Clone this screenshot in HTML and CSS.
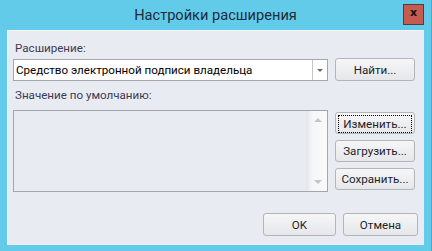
FILE: index.html
```html
<!DOCTYPE html>
<html lang="ru">
<head>
    <meta charset="UTF-8">
    <title>Настройки расширения</title>
    <link rel="stylesheet" href="styles.css">
</head>
<body>
    <div class="window">
        <div class="titlebar">
            <span class="title">Настройки расширения</span>
            <div class="close-btn">x</div>
        </div>
        <div class="client">
            <div class="label">Расширение:</div>
            <div class="row">
                <div class="combo">
                    <span class="combo-text">Средство электронной подписи владельца</span>
                    <span class="combo-arrow"></span>
                </div>
                <button class="btn">Найти...</button>
            </div>
            <div class="label second">Значение по умолчанию:</div>
            <div class="row top">
                <div class="listbox">
                    <div class="scrollbar">
                        <span class="arrow-up"></span>
                        <span class="arrow-down"></span>
                    </div>
                </div>
                <div class="side-buttons">
                    <button class="btn focused"><span>Изменить...</span></button>
                    <button class="btn">Загрузить...</button>
                    <button class="btn">Сохранить...</button>
                </div>
            </div>
            <div class="footer">
                <button class="btn ok">OK</button>
                <button class="btn cancel">Отмена</button>
            </div>
        </div>
    </div>
</body>
</html>
```

FILE: styles.css
```css
body {
    margin: 0;
    background-color: #63cbea;
    font-family: Roboto, "Noto Sans", sans-serif;
}
.window {
    width: 432px;
    height: 251px;
    display: flex;
    flex-direction: column;
    box-sizing: border-box;
    border-right: 1px solid #4aa8c8;
}
.titlebar {
    height: 30px;
    position: relative;
    display: flex;
    justify-content: center;
    align-items: center;
}
.title {
    font-size: 14.6px;
    color: #1d2b3a;
}
.close-btn {
    position: absolute;
    top: 4px;
    left: 403px;
    width: 19px;
    height: 19px;
    border: 1px solid #4b4040;
    background-color: #c75b50;
    color: #111;
    font-size: 11px;
    font-weight: bold;
    line-height: 16px;
    text-align: center;
    font-family: "DejaVu Sans", sans-serif;
}
.client {
    margin: 0 7px 6px 7px;
    flex: 1;
    background-color: #e8ebf1;
    border-top: 1px solid #f4f6f9;
    border-left: 1px solid #f4f6f9;
    padding: 9px 9px 0 5px;
    display: flex;
    flex-direction: column;
}
.label {
    font-size: 11.6px;
    line-height: 16px;
    color: #3a3a55;
    padding-left: 2px;
}
.label.second {
    margin-top: 6px;
}
.row {
    display: flex;
    gap: 7px;
    align-items: flex-end;
    margin-top: 2px;
}
.row.top {
    align-items: flex-start;
    margin-top: 7px;
}
.combo {
    width: 315px;
    height: 22px;
    box-sizing: border-box;
    border: 1px solid #a4a7ad;
    background-color: white;
    display: flex;
    align-items: center;
}
.combo-text {
    flex: 1;
    font-size: 11.6px;
    color: #000;
    padding-left: 2px;
}
.combo-arrow {
    width: 14px;
    height: 20px;
    border-left: 1px solid #c4c6ca;
    position: relative;
}
.combo-arrow::after {
    content: "";
    position: absolute;
    left: 4px;
    top: 9px;
    border-left: 3px solid transparent;
    border-right: 3px solid transparent;
    border-top: 3px solid #6b6b6b;
}
.btn {
    width: 80px;
    height: 23px;
    box-sizing: border-box;
    border: 1px solid #b3b5b9;
    border-radius: 3px;
    background: linear-gradient(#f6f6f7, #e6e7ea);
    font-family: Roboto, "Noto Sans", sans-serif;
    font-size: 11.6px;
    color: #1e1e28;
    padding: 0;
}
.listbox {
    width: 315px;
    height: 82px;
    box-sizing: border-box;
    border: 1px solid #a4a6ab;
    display: flex;
    justify-content: flex-end;
}
.scrollbar {
    width: 21px;
    position: relative;
    background: linear-gradient(to right, #e2e4e8, #f5f6f8 6px, #fafafa);
}
.arrow-up, .arrow-down {
    position: absolute;
    left: 8px;
    border-left: 4px solid transparent;
    border-right: 4px solid transparent;
}
.arrow-up {
    top: 7px;
    border-bottom: 4px solid #c3c5c9;
}
.arrow-down {
    bottom: 7px;
    border-top: 4px solid #c3c5c9;
}
.side-buttons {
    display: flex;
    flex-direction: column;
    gap: 6px;
    margin-top: 2px;
}
.side-buttons .btn {
    height: 22px;
}
.btn.focused span {
    display: block;
    margin: 2px;
    height: 16px;
    line-height: 16px;
    border: 1px dotted #000;
}
.footer {
    display: flex;
    justify-content: flex-end;
    gap: 7px;
    margin-top: 21px;
    margin-right: -3px;
}
.btn.ok {
    width: 73px;
}
.btn.cancel {
    width: 75px;
}
```
